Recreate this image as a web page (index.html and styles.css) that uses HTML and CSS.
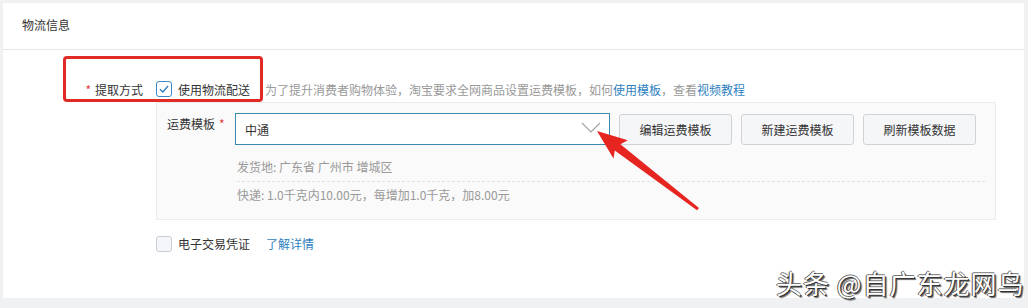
FILE: index.html
```html
<!DOCTYPE html>
<html lang="zh">
<head>
<meta charset="utf-8">
<link rel="stylesheet" href="styles.css">
</head>
<body>
<div class="card">
  <div class="card-head">物流信息</div>
  <div class="card-body">
    <div class="row row-method">
      <div class="label"><span class="req">*</span>提取方式</div>
      <label class="check">
        <span class="box checked"><svg viewBox="0 0 16 16" width="16" height="16"><path d="M3.5 8.3 L6.6 11.3 L12.6 4.6" fill="none" stroke="#2f7fc4" stroke-width="1.6"/></svg></span>
        <span class="check-text">使用物流配送</span>
      </label>
      <span class="hint">为了提升消费者购物体验，淘宝要求全网商品设置运费模板，如何<a class="link">使用模板</a>，查看<a class="link">视频教程</a></span>
    </div>
    <div class="panel">
      <div class="panel-row">
        <div class="panel-label">运费模板<span class="req2">*</span></div>
        <div class="select">
          <span>中通</span>
          <svg class="chev" viewBox="0 0 20 12" width="20" height="12"><path d="M1 1 L10 10 L19 1" fill="none" stroke="#a0a0a0" stroke-width="1.1"/></svg>
        </div>
        <button class="btn">编辑运费模板</button>
        <button class="btn">新建运费模板</button>
        <button class="btn">刷新模板数据</button>
      </div>
      <div class="info">
        <div class="info-line first">发货地: 广东省 广州市 增城区</div>
        <div class="info-line second">快递: 1.0千克内10.00元，每增加1.0千克，加8.00元</div>
      </div>
    </div>
    <div class="row row-ticket">
      <label class="check">
        <span class="box"></span>
        <span class="check-text">电子交易凭证</span>
      </label>
      <a class="link detail">了解详情</a>
    </div>
  </div>
</div>
<div class="redbox"></div>
<svg class="arrow" viewBox="0 0 1028 308" width="1028" height="308">
  <polygon points="597,131 627.8,140.2 620.4,144.2 699,208 697,210.2 614.8,150.5 613.5,158.5" fill="#e62420"/>
</svg>
<div class="watermark">头条 @自广东龙网鸟</div>
</body>
</html>
```
FILE: styles.css
```css
* { box-sizing: border-box; }
html, body { margin: 0; padding: 0; }
body {
  width: 1028px;
  height: 308px;
  background: #f0f1f3;
  font-family: "Noto Sans CJK SC", "Noto Sans", sans-serif;
  font-size: 12px;
  color: #333;
  position: relative;
  overflow: hidden;
  padding: 3px 4px 0 3px;
}
.card {
  background: #fff;
  height: 295px;
}
.card-head {
  height: 47px;
  line-height: 44px;
  padding-left: 19px;
  border-bottom: 1px solid #e6e6e6;
  color: #333;
}
.card-body {
  padding-top: 31px;
}
.row {
  display: flex;
  align-items: center;
}
.row-method {
  height: 16px;
}
.label {
  width: 153px;
  padding-right: 13px;
  text-align: right;
  color: #333;
}
.req { color: #e4393c; margin-right: 4px; }
.req2 { color: #e4393c; margin-left: 4px; }
.check {
  display: flex;
  align-items: center;
}
.box {
  width: 16px;
  height: 16px;
  border: 1px solid #c9ced6;
  border-radius: 3px;
  background: #f3f5f8;
  display: flex;
  align-items: center;
  justify-content: center;
}
.box.checked {
  background: #fff;
  border-color: #3b86c8;
}
.box svg { display: block; }
.check-text { margin-left: 6px; }
.hint {
  margin-left: 15px;
  color: #999;
}
.link { color: #2f7fc0; cursor: pointer; }
.panel {
  margin-left: 153px;
  margin-top: 5px;
  width: 840px;
  height: 118px;
  background: #fafafa;
  border: 1px solid #ececec;
  padding: 10px 10px 0 10px;
}
.panel-row {
  display: flex;
  align-items: center;
}
.panel-label {
  width: 68px;
  align-self: flex-start;
  padding-top: 2px;
  color: #333;
}
.select {
  width: 375px;
  height: 32px;
  border: 1px solid #3a8ab0;
  background: #fff;
  display: flex;
  align-items: center;
  justify-content: space-between;
  padding: 0 8px 0 9px;
  color: #333;
}
.chev { display: block; margin-top: -2px; }
.btn {
  margin-left: 9px;
  width: 113px;
  height: 31px;
  border: 1px solid #cfd3d8;
  border-radius: 3px;
  background: #f5f6f8;
  font-family: inherit;
  font-size: 12px;
  color: #333;
  padding: 0;
}
.info {
  margin-left: 70px;
  padding-top: 12px;
}
.info-line {
  color: #999;
  line-height: 20px;
}
.info-line.first {
  border-bottom: 1px dashed #e2e2e2;
  height: 25px;
}
.info-line.second {
  padding-top: 3px;
}
.row-ticket {
  margin-left: 153px;
  margin-top: 15px;
}
.detail { margin-left: 16px; }
.redbox {
  position: absolute;
  left: 63px;
  top: 56px;
  width: 200px;
  height: 46px;
  border: 3px solid #e02a26;
  border-radius: 4px;
}
.arrow {
  position: absolute;
  left: 0;
  top: 0;
  pointer-events: none;
}
.watermark {
  position: absolute;
  left: 776px;
  top: 266px;
  font-size: 26px;
  line-height: 34px;
  color: #fff;
  letter-spacing: 1px;
  text-shadow: 1px 1px 0 #333, -1px 0 0 #555, 0 -1px 0 #777, 2px 2px 1px #666;
  white-space: nowrap;
}
```
